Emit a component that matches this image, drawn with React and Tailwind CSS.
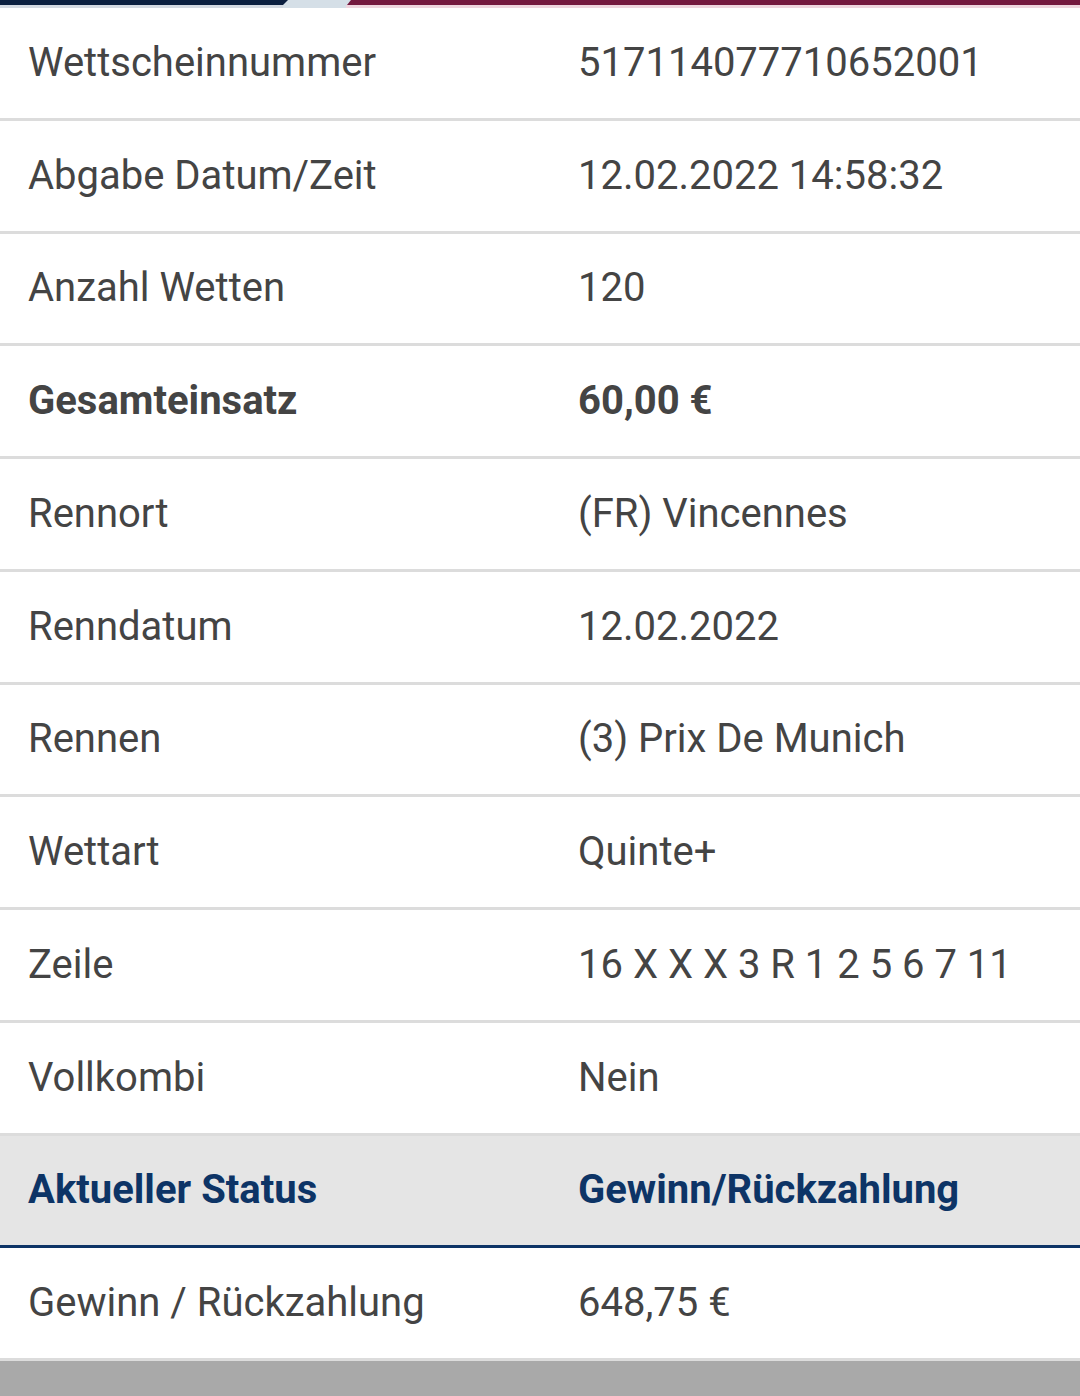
import React from 'react';

const rows = [
  { label: 'Wettscheinnummer', value: '517114077710652001' },
  { label: 'Abgabe Datum/Zeit', value: '12.02.2022 14:58:32' },
  { label: 'Anzahl Wetten', value: '120' },
  { label: 'Gesamteinsatz', value: '60,00 €', bold: true },
  { label: 'Rennort', value: '(FR) Vincennes' },
  { label: 'Renndatum', value: '12.02.2022' },
  { label: 'Rennen', value: '(3) Prix De Munich' },
  { label: 'Wettart', value: 'Quinte+' },
  { label: 'Zeile', value: '16 X X X 3 R 1 2 5 6 7 11' },
  { label: 'Vollkombi', value: 'Nein' },
];

const Row = ({ label, value, bold }) => (
  <div className={`flex items-center h-[112.75px] border-b-[3px] border-[#dcdcdc] bg-white ${bold ? 'font-bold' : ''}`}>
    <div className="w-[578px] pl-[28px]">{label}</div>
    <div className="flex-1">{value}</div>
  </div>
);

const App = () => {
  return (
    <div className="w-[1080px] h-[1396px] bg-[#a9a9a9] overflow-hidden text-[40px] leading-[48px] text-[#444444] font-['Roboto',sans-serif]">
      {/* Markenleiste oben */}
      <div className="relative h-[8px] bg-[#d5dfe7]">
        <div className="absolute left-0 top-0 h-[5px] w-[288px] bg-[#0b1f3f] [clip-path:polygon(0_0,100%_0,calc(100%-5px)_100%,0_100%)]" />
        <div className="absolute left-0 top-[5px] h-[3px] w-[283px] bg-[#d3d9e1]" />
        <div className="absolute left-[347px] right-0 top-0 h-[5px] bg-[#74193f] [clip-path:polygon(4px_0,100%_0,100%_100%,0_100%)]" />
        <div className="absolute left-[346px] right-0 top-[5px] h-[3px] bg-[#eed5de]" />
      </div>

      <div className="flex flex-col">
        {rows.map((r) => (
          <Row key={r.label} {...r} />
        ))}

        <div className="flex items-center h-[112.75px] bg-[#e5e5e5] border-b-[3px] border-[#0d3466] font-bold text-[#0d3466]">
          <div className="w-[578px] pl-[28px]">Aktueller Status</div>
          <div className="flex-1">Gewinn/Rückzahlung</div>
        </div>

        <Row label="Gewinn / Rückzahlung" value="648,75 €" />
      </div>
    </div>
  );
};

export default App;
